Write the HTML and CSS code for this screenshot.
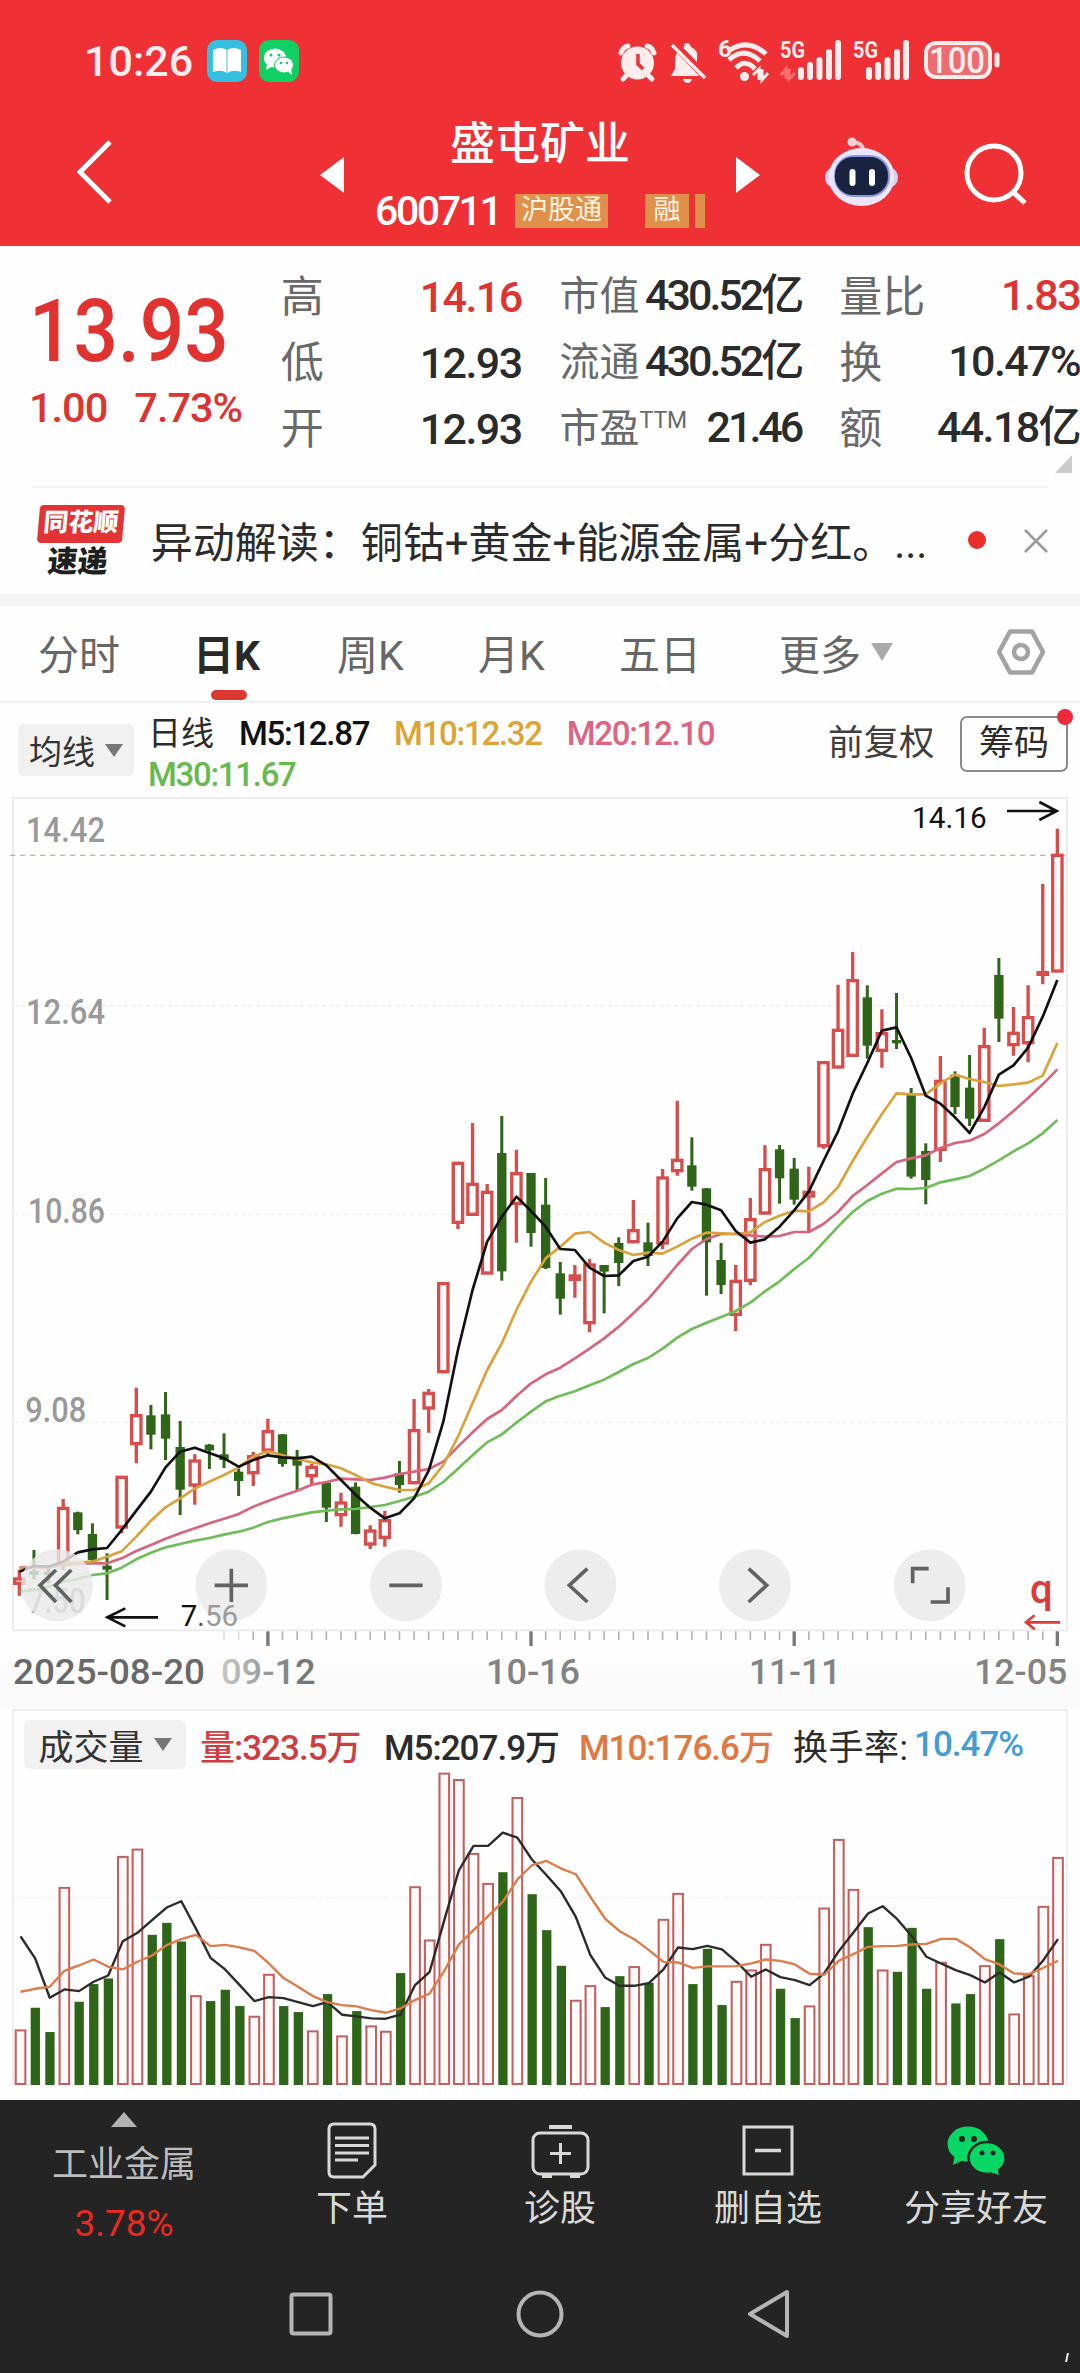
FILE: index.html
```
<!DOCTYPE html>
<html lang="zh-CN">
<head>
  <meta charset="UTF-8">
  <title>盛屯矿业 600711</title>
  <link rel="stylesheet" href="styles.css">
</head>
<body>
  <header class="top">
    <div class="status">
      <span class="clock">10:26</span>
      <svg class="app-icon" viewBox="0 0 40 42">
        <rect width="40" height="42" rx="10" fill="#35bfe0"/>
        <path d="M6 10Q14 6 20 10Q26 6 34 10V32Q26 29 20 33Q14 29 6 32Z" fill="#fff"/>
        <path d="M20 10V33" stroke="#a9dcea" stroke-width="2"/>
      </svg>
      <svg class="app-icon" viewBox="0 0 40 42">
        <rect width="40" height="42" rx="10" fill="#10cf63"/>
        <ellipse cx="16" cy="18" rx="11" ry="9.500" fill="#fff"/>
        <path d="M8 24L7 30L14 26Z" fill="#fff"/>
        <ellipse cx="25" cy="25" rx="9.500" ry="8" fill="#fff" stroke="#10cf63" stroke-width="1"/>
        <path d="M28 31L33 35L32 28Z" fill="#fff"/>
        <g fill="#10cf63"><circle cx="12" cy="15" r="1.500"/><circle cx="20" cy="15" r="1.500"/><circle cx="22" cy="23" r="1.300"/><circle cx="28" cy="23" r="1.300"/></g>
      </svg>
      <svg class="status-icons" viewBox="0 0 386 46">
        <!-- alarm -->
        <g fill="none" stroke="#ffecec" stroke-linecap="round">
          <path d="M4 11Q6 5 11 4M37 11Q35 5 30 4" stroke-width="5"/>
          <path d="M9 34L6 37M32 34L35 37" stroke-width="5"/>
        </g>
        <circle cx="20.500" cy="21" r="16.500" fill="#ffecec"/>
        <path d="M21 12V22L26 27" fill="none" stroke="#ef3034" stroke-width="3.500"/>
        <!-- muted bell -->
        <path d="M54 34H84L80 27V18Q82 8 74 5Q73 1 70 1Q67 1 67 5Q58 9 58 19V27ZM66 37H75Q74 41 70.500 41Q67 41 66 37Z" fill="#ffecec"/>
        <path d="M58 3L88 34" stroke="#ef3034" stroke-width="8"/>
        <path d="M55 3L88 36" stroke="#ffecec" stroke-width="3.500"/>
        <!-- wifi 6 -->
        <text x="101" y="15" class="tiny" textLength="10">6</text>
        <g fill="none" stroke="#ffecec" stroke-width="5">
          <path d="M113 8Q131 -4 149 12"/><path d="M112 18Q127 4 143 19"/><path d="M119 26Q128 16 138 27"/>
        </g>
        <circle cx="127.500" cy="34.500" r="4.500" fill="#ffecec"/>
        <path d="M136 33L142 27V38M151 31L145 38V27" stroke="#ffecec" stroke-width="3" fill="none"/>
        <!-- signals -->
        <text x="163" y="16" class="tiny" textLength="25" lengthAdjust="spacingAndGlyphs">5G</text>
        <path d="M164 33L169 27V37M178 31L172 37V27" stroke="#f97070" stroke-width="3" fill="none"/>
        <path d="M184 28V35M193 23V35M202.500 18V35M212 10V35M221 1V35" stroke="#ffecec" stroke-width="6" stroke-linecap="round"/>
        <text x="236" y="16" class="tiny" textLength="25" lengthAdjust="spacingAndGlyphs">5G</text>
        <path d="M252 28V35M261 23V35M270.500 18V35M280 10V35M289 1V35" stroke="#ffecec" stroke-width="6" stroke-linecap="round"/>
        <!-- battery -->
        <rect x="309" y="1" width="64" height="34" rx="10" fill="#ee6b70" stroke="#ffecec" stroke-width="4"/>
        <path d="M380 13V23" stroke="#ffecec" stroke-width="5" stroke-linecap="round"/>
        <text x="312" y="31" class="battery" textLength="56" lengthAdjust="spacingAndGlyphs">100</text>
      </svg>
    </div>
    <nav class="nav">
      <svg class="back" viewBox="0 0 36 64"><path d="M33 2L3 32L33 62" fill="none" stroke="#fff" stroke-width="5"/></svg>
      <svg class="tri prev" viewBox="0 0 24 36"><path d="M24 0V36L0 18Z" fill="#fff"/></svg>
      <div class="title">
        <h1>盛屯矿业</h1>
        <div class="code"><span class="num">600711</span><b class="tag">沪股通</b><b class="tag rong">融</b><b class="tag cut"></b></div>
      </div>
      <svg class="tri" viewBox="0 0 24 36"><path d="M0 0V36L24 18Z" fill="#fff"/></svg>
      <svg class="robot" viewBox="0 0 76 70">
        <path d="M40 13Q40 6 30 5" fill="none" stroke="#f0c4cf" stroke-width="4"/>
        <circle cx="29" cy="5" r="4.500" fill="#f8d3da"/>
        <rect x="2" y="30" width="73" height="21" rx="10" fill="#d9cff4"/>
        <ellipse cx="38.500" cy="40" rx="33" ry="29" fill="#ebe6fb"/>
        <rect x="11" y="18" width="56" height="42" rx="20" fill="#8d92ec"/>
        <rect x="12" y="20" width="53" height="38" rx="18" fill="#17233f"/>
        <path d="M29.500 35V46M49 35V46" stroke="#fff" stroke-width="6" stroke-linecap="round"/>
      </svg>
      <svg class="search" viewBox="0 0 64 64"><circle cx="30" cy="30" r="27" fill="none" stroke="#fff" stroke-width="5"/><path d="M49 49L61 60" stroke="#fff" stroke-width="5"/></svg>
    </nav>
  </header>

  <section class="quote">
    <div class="last">
      <div class="price">13.93</div>
      <div class="change"><span>1.00</span><span>7.73%</span></div>
    </div>
    <dl class="stats s1">
      <div><dt>高</dt><dd class="up">14.16</dd></div>
      <div><dt>低</dt><dd>12.93</dd></div>
      <div><dt>开</dt><dd>12.93</dd></div>
    </dl>
    <dl class="stats s2">
      <div><dt>市值</dt><dd>430.52亿</dd></div>
      <div><dt>流通</dt><dd>430.52亿</dd></div>
      <div><dt>市盈<sup>TTM</sup></dt><dd>21.46</dd></div>
    </dl>
    <dl class="stats s3">
      <div><dt>量比</dt><dd class="up">1.83</dd></div>
      <div><dt>换</dt><dd>10.47%</dd></div>
      <div><dt>额</dt><dd>44.18亿</dd></div>
    </dl>
    <i class="corner"></i>
  </section>

  <section class="news">
    <div class="logo"><span class="logo-top">同花顺</span><span class="logo-bottom">速递</span></div>
    <p>异动解读：铜钴+黄金+能源金属+分红。...</p>
    <i class="dot"></i>
    <svg class="close" viewBox="0 0 26 26"><path d="M2 2L24 24M24 2L2 24" stroke="#999" stroke-width="2.500"/></svg>
  </section>

  <div class="tabs">
    <span>分时</span>
    <span class="on">日K</span>
    <span>周K</span>
    <span>月K</span>
    <span>五日</span>
    <span class="more">更多<i class="down"></i></span>
    <svg class="gear" viewBox="0 0 50 46"><path d="M14 2.500H36L47 23L36 43.500H14L3 23Z" fill="none" stroke="#a2a2a2" stroke-width="4.500" stroke-linejoin="round"/><circle cx="25" cy="23" r="7" fill="none" stroke="#a2a2a2" stroke-width="4.500"/></svg>
  </div>

  <div class="ma">
    <span class="chip">均线<i class="down"></i></span>
    <div class="ma-list">
      <span class="cn">日线</span><span class="m5">M5:12.87</span><span class="m10">M10:12.32</span><span class="m20">M20:12.10</span><span class="m30">M30:11.67</span>
    </div>
    <span class="fuquan">前复权</span>
    <span class="chouma">筹码<i></i></span>
  </div>

  <svg id="kline" class="kline" viewBox="0 51 3240 2733"></svg>

  <section class="volume">
    <div class="vol-head">
      <span class="chip">成交量<i class="down"></i></span>
      <span class="v1">量:323.5万</span>
      <span class="v2">M5:207.9万</span>
      <span class="v3">M10:176.6万</span>
      <span class="v4">换手率:</span><span class="v5">10.47%</span>
    </div>
    <svg id="vol" class="vol-chart" viewBox="38 203 3062 952" preserveAspectRatio="none"></svg>
  </section>

  <footer class="bottom">
    <div class="menu">
      <div class="sector"><i class="caret"></i><span>工业金属</span><em>3.78%</em></div>
      <div class="item">
        <svg viewBox="0 0 60 58"><path d="M12 2H48Q53 2 53 7V43L41 55H12Q7 55 7 50V7Q7 2 12 2ZM13 16H47M13 23.500H47M13 31H47M13 38H36" fill="none" stroke="#d8d8d8" stroke-width="3"/></svg>
        <span>下单</span>
      </div>
      <div class="item">
        <svg viewBox="0 0 60 58"><rect x="3" y="11" width="55" height="41" rx="7" fill="none" stroke="#d8d8d8" stroke-width="3"/><path d="M19 5H42M12 54H22M40 54H50" stroke="#d8d8d8" stroke-width="4"/><path d="M30.500 21V42M20 31.500H41" stroke="#d8d8d8" stroke-width="3"/></svg>
        <span>诊股</span>
      </div>
      <div class="item">
        <svg viewBox="0 0 60 58"><rect x="6" y="5" width="48" height="47" fill="none" stroke="#d8d8d8" stroke-width="3"/><path d="M17 28.500H43" stroke="#d8d8d8" stroke-width="3.500"/></svg>
        <span>删自选</span>
      </div>
      <div class="item">
        <svg viewBox="0 0 60 58"><g fill="#07d765"><ellipse cx="22" cy="22" rx="20.500" ry="17.500"/><path d="M9 32L7 43L19 37Z"/><ellipse cx="41" cy="36" rx="18.500" ry="16" stroke="#242424" stroke-width="2.500"/><path d="M44 50L53 53L51 44Z"/></g><g fill="#242424"><circle cx="16" cy="17" r="3"/><circle cx="28" cy="17" r="3"/><circle cx="36" cy="31" r="2.500"/><circle cx="47" cy="31" r="2.500"/></g></svg>
        <span>分享好友</span>
      </div>
    </div>
    <div class="sysnav">
      <svg viewBox="0 0 48 50"><rect x="4.500" y="5.500" width="39" height="39" rx="2" fill="none" stroke="#b5b5b5" stroke-width="4"/></svg>
      <svg viewBox="0 0 48 50"><circle cx="24" cy="25" r="21.500" fill="none" stroke="#b5b5b5" stroke-width="4"/></svg>
      <svg viewBox="0 0 48 50"><path d="M42 3V47L5 25Z" fill="none" stroke="#b5b5b5" stroke-width="4" stroke-linejoin="round"/></svg>
    </div>
    <i class="mark"></i>
  </footer>

  <script src="chart.js"></script>
</body>
</html>
```
FILE: styles.css
```
* {
  box-sizing: border-box;
}

body {
  margin: 0;
  width: 1080px;
  height: 2373px;
  overflow: hidden;
  background: #fefefe;
  color: #2b2b2b;
  font-family: Roboto, "Noto Sans CJK SC", sans-serif;
}

svg {
  display: block;
  flex: none;
}

i, em, b {
  font-style: normal;
  font-weight: 400;
}

/* header */
.top {
  height: 246px;
  background: #ef3034;
  color: #fff;
}

.status {
  display: flex;
  align-items: center;
  height: 122px;
  padding-left: 84px;
}

.clock {
  width: 123px;
  font-size: 43px;
  font-weight: 500;
  color: #ffecec;
}

.app-icon {
  width: 40px;
  height: 42px;
  margin-right: 12px;
}

.status-icons {
  width: 386px;
  height: 46px;
  margin: 8px 0 0 306px;
  overflow: visible;
}

.tiny {
  font-size: 24px;
  font-weight: 700;
  fill: #ffecec;
}

.battery {
  font-size: 36px;
  font-weight: 500;
  fill: #ffecec;
}

.nav {
  display: flex;
  height: 124px;
}

.back {
  width: 36px;
  height: 64px;
  margin: 18px 0 0 77px;
}

.tri {
  width: 24px;
  height: 36px;
  margin-top: 35px;
}

.prev {
  margin-left: 207px;
}

.title {
  width: 392px;
}

h1 {
  margin: 0;
  font-size: 45px;
  font-weight: 500;
  line-height: 46px;
  text-align: center;
}

.code {
  display: flex;
  justify-content: center;
  align-items: center;
  height: 34px;
  margin-top: 26px;
}

.code .num {
  width: 140px;
  font-size: 41px;
  font-weight: 500;
  letter-spacing: -2.4px;
}

.tag {
  width: 93px;
  height: 34px;
  background: #df914b;
  color: #fff3e2;
  font-size: 27px;
  line-height: 33px;
  text-align: center;
}

.rong {
  width: 44px;
  margin: 0 6px 0 37px;
}

.cut {
  width: 10px;
}

.robot {
  width: 76px;
  height: 70px;
  margin: 15px 0 0 63px;
}

.search {
  width: 64px;
  height: 64px;
  margin: 21px 0 0 65px;
}

/* quote */
.quote {
  position: relative;
  display: flex;
  height: 240px;
  padding-top: 18px;
}

.last {
  width: 281px;
  padding-left: 29px;
  color: #e03331;
}

.price {
  height: 100px;
  margin-top: 17px;
  font-size: 88px;
  font-weight: 500;
  line-height: 100px;
  transform: scaleX(0.89);
  transform-origin: left;
}

.change {
  display: flex;
  gap: 27px;
  margin-top: 2px;
  font-size: 41.5px;
  font-weight: 500;
  line-height: 50px;
  letter-spacing: -1px;
}

.stats {
  margin: 0;
}

.stats div {
  display: flex;
  justify-content: space-between;
  align-items: center;
  height: 66px;
  white-space: nowrap;
}

dt {
  position: relative;
  top: -4px;
  color: #696969;
  font-size: 43px;
}

dd {
  margin: 0;
  font-size: 43px;
  font-weight: 500;
  letter-spacing: -1.6px;
  line-height: 64px;
}

dd.up {
  color: #e03331;
}

sup {
  font-size: 23px;
  line-height: 0;
  vertical-align: 14px;
}

.s1 {
  width: 241px;
}

.s2 {
  width: 242px;
  margin-left: 38px;
}

.s2 dt {
  font-size: 40px;
}

.s2 dd {
  letter-spacing: -3px;
}

.s2 dd,
.s3 dd {
  position: relative;
  top: -2px;
}

.s3 {
  width: 241px;
  margin-left: 38px;
}

.corner {
  position: absolute;
  right: 8px;
  bottom: 13px;
  border-left: 17px solid transparent;
  border-bottom: 18px solid #ccc;
}

/* news line */
.news {
  display: flex;
  align-items: center;
  height: 108px;
  margin: 0 31px;
  border-top: 2px solid #f3f3f3;
}

.logo {
  width: 85px;
  margin: 0 30px 0 6px;
  transform: skewX(-5deg);
}

.logo span {
  display: block;
  text-align: center;
  font-weight: 900;
}

.logo-top {
  height: 38px;
  border-radius: 4px;
  background: #e33435;
  color: #fff;
  font-size: 25px;
  line-height: 36px;
}

.logo-bottom {
  height: 34px;
  color: #1f1f1f;
  font-size: 30px;
  line-height: 38px;
}

.news p {
  width: 786px;
  margin: -4px 0 0 -1px;
  font-size: 42px;
  white-space: nowrap;
}

.dot {
  flex: none;
  width: 18px;
  height: 18px;
  margin: -2px 44px 0 34px;
  border-radius: 50%;
  background: #ea2d2b;
}

.news p + .dot {
  margin-right: 37px;
}

.close {
  width: 26px;
  height: 26px;
}

/* period tabs */
.tabs {
  display: flex;
  align-items: center;
  height: 109px;
  padding: 0 0 3px 38px;
  border-top: 12px solid #f4f4f4;
  border-bottom: 2px solid #f0f0f0;
  color: #666;
  font-size: 41px;
}

.tabs span {
  width: 141px;
  white-space: nowrap;
}

.tabs .on {
  position: relative;
  width: 66px;
  margin: 0 78px 0 14px;
  color: #292929;
  font-weight: 700;
}

.tabs .on::after {
  content: "";
  position: absolute;
  left: 18px;
  bottom: -18px;
  width: 36px;
  height: 10px;
  border-radius: 5px;
  background: #dc3731;
}

.tabs .more {
  display: flex;
  align-items: center;
  width: 217px;
  margin-left: 19px;
}

.down {
  display: inline-block;
  border: 11px solid transparent;
  border-top: 18px solid #aaa;
  border-bottom: 0;
  margin-left: 10px;
}

.gear {
  width: 50px;
  height: 46px;
}

/* moving averages */
.ma {
  display: flex;
  height: 94px;
  padding-left: 18px;
}

.chip {
  display: flex;
  align-items: center;
  justify-content: center;
  border-radius: 6px;
  background: #f1f1f1;
  color: #333;
}

.chip .down {
  border-width: 13px 9px 0;
  border-top-color: #777;
}

.ma .chip {
  flex: none;
  width: 116px;
  height: 52px;
  margin-top: 21px;
  font-size: 33px;
}

.ma-list {
  display: flex;
  flex: none;
  flex-wrap: wrap;
  align-content: flex-start;
  column-gap: 25px;
  width: 680px;
  padding: 10px 60px 0 14px;
  font-size: 33px;
  font-weight: 500;
  line-height: 41px;
  letter-spacing: -1.3px;
}

.cn {
  font-weight: 400;
  letter-spacing: 0;
}

.m5 {
  color: #111;
}

.m10 {
  color: #dca336;
}

.m20 {
  color: #df6480;
}

.m30 {
  color: #65b94f;
}

.fuquan {
  flex: none;
  width: 146px;
  padding-left: 14px;
  font-size: 35.5px;
  line-height: 80px;
  color: #3f3f3f;
  white-space: nowrap;
}

.chouma {
  position: relative;
  flex: none;
  width: 108px;
  height: 56px;
  margin-top: 13px;
  border: 2px solid #8b8b8b;
  border-radius: 7px;
  font-size: 35px;
  line-height: 51px;
  text-align: center;
}

.chouma i {
  position: absolute;
  top: -9px;
  right: -7px;
  width: 16px;
  height: 16px;
  border-radius: 50%;
  background: #f0283c;
}

.kline {
  width: 1080px;
  height: 911px;
}

.axis {
  font-size: 103px;
  font-weight: 500;
  fill: #999;
}

.mark-text {
  font-size: 88px;
  fill: #111;
}

.date {
  font-size: 106px;
  font-weight: 500;
  fill: #838383;
}

/* volume */
.volume {
  height: 376px;
  margin: 1px 12px 16px;
  border: 2px solid #eee;
  border-bottom: 0;
}

.vol-head {
  display: flex;
  align-items: center;
  height: 57px;
  padding: 10px 0 0 10px;
  font-size: 35px;
  font-weight: 500;
  letter-spacing: -1px;
  white-space: nowrap;
}

.vol-head .chip {
  width: 162px;
  height: 49px;
  margin-right: 14px;
  font-weight: 400;
  letter-spacing: 0;
}

.v1 {
  width: 184px;
  color: #cf3e3e;
}

.v2 {
  width: 195px;
}

.v3 {
  width: 214px;
  color: #e27742;
}

.v4 {
  width: 121px;
  font-weight: 400;
  letter-spacing: 0.5px;
}

.v5 {
  color: #429dd5;
}

.vol-chart {
  width: 1054px;
  height: 317px;
}

/* bottom bar */
.bottom {
  position: relative;
  height: 275px;
  margin-top: -1px;
  background: #242424;
  color: #d9d9d9;
}

.menu {
  display: flex;
  height: 170px;
  font-size: 36px;
}

.sector {
  display: flex;
  flex-direction: column;
  align-items: center;
  width: 248px;
  padding-top: 12px;
}

.sector span {
  margin-top: 13px;
  line-height: 50px;
  color: #bcbcbc;
}

.sector em {
  margin-top: 10px;
  color: #ea2a22;
  font-size: 37px;
  line-height: 48px;
}

.caret {
  border: 13px solid transparent;
  border-top: 0;
  border-bottom: 15px solid #b3b3b3;
}

.item {
  display: flex;
  flex-direction: column;
  align-items: center;
  width: 208px;
  padding-top: 22px;
}

.item svg {
  width: 60px;
  height: 58px;
}

.item span {
  margin-top: 4px;
  line-height: 50px;
}

.sysnav {
  display: flex;
  justify-content: center;
  gap: 181px;
  padding-top: 19px;
}

.sysnav svg {
  width: 48px;
  height: 50px;
}

.mark {
  position: absolute;
  right: 12px;
  bottom: 13px;
  width: 2px;
  height: 9px;
  background: #eee;
  transform: skewX(-12deg);
}
```
FILE: chart.js
```
// one row per day: [up, high, body top, body bottom, low, volume top]
const days = [
  [1,2370,2395,2412,2447,988],[0,2310,2373,2385,2398,923],[0,2365,2375,2385,2410,996],[1,2157,2183,2355,2370,560],
  [0,2195,2197,2250,2263,905],[0,2230,2262,2340,2345,852],[0,2320,2357,2369,2460,835],[1,2088,2090,2243,2260,467],
  [1,1823,1905,1993,2050,445],[0,1875,1906,1964,2008,704],[0,1836,1903,1976,2040,668],[0,1923,2001,2129,2205,724],
  [1,2023,2041,2117,2174,885],[0,1992,1994,2011,2067,903],[0,1960,2023,2040,2064,869],[0,2065,2075,2103,2148,918],
  [1,2016,2028,2080,2118,947],[1,1916,1953,2012,2025,821],[0,1962,1963,2052,2060,918],[0,2010,2030,2057,2130,936],
  [1,2052,2060,2089,2115,991],[0,2103,2108,2183,2226,882],[1,2138,2167,2206,2240,1006],[0,2107,2120,2262,2263,933],
  [1,2236,2251,2294,2307,976],[1,2192,2220,2274,2300,992],[0,2043,2080,2115,2138,819],[1,1857,1950,2110,2113,558],
  [1,1827,1838,1886,1958,718],[1,1507,1509,1777,1780,217],[1,1145,1148,1329,1347,236],[1,1029,1211,1305,1307,458],
  [1,1212,1235,1481,1483,548],[0,1008,1119,1474,1502,516],[1,1109,1179,1272,1388,290],[0,1179,1179,1359,1400,582],
  [0,1194,1274,1464,1467,690],[0,1446,1480,1556,1604,797],[1,1455,1486,1500,1553,899],[1,1437,1453,1630,1657,855],
  [0,1455,1455,1475,1600,921],[0,1372,1389,1449,1518,828],[1,1260,1350,1387,1390,798],[0,1328,1387,1428,1458,848],
  [1,1167,1192,1391,1408,656],[1,962,1139,1174,1187,578],[0,1072,1156,1220,1232,852],[0,1224,1225,1387,1547,746],
  [0,1389,1440,1515,1542,915],[1,1455,1502,1605,1653,842],[1,1254,1317,1503,1516,808],[1,1096,1167,1301,1303,731],
  [0,1095,1108,1195,1271,866],[0,1134,1166,1259,1274,954],[1,1160,1235,1250,1356,916],[1,843,846,1099,1106,622],
  [1,614,749,863,865,416],[1,516,600,828,830,566],[0,616,652,797,836,681],[1,688,759,813,863,808],
  [0,639,780,790,807,815],[0,924,943,1190,1196,683],[0,1090,1113,1200,1273,866],[1,828,902,1110,1146,785],
  [0,874,884,981,1002,910],[0,825,923,1016,1038,882],[1,743,798,1023,1025,795],[0,534,585,716,786,717],
  [1,681,758,796,827,940],[1,616,711,790,847,825],[1,312,576,585,613,617],[1,146,224,575,577,470]
];

const ma5 = [2375,2358,2360,2345,2317,2308,2304,2250,2192,2135,2062,2015,2003,2019,2035,2060,2040,2026,2032,2035,2030,2056,2100,2144,2183,2215,2200,2155,2072,1925,1710,1530,1385,1310,1250,1293,1340,1407,1410,1463,1488,1486,1443,1430,1385,1315,1266,1274,1291,1353,1388,1378,1340,1291,1235,1143,1054,941,849,752,742,834,947,971,1012,1059,982,884,856,803,710,600];
const ma10 = [2365,2362,2360,2350,2348,2345,2330,2314,2270,2222,2182,2155,2126,2105,2085,2062,2030,2014,2026,2037,2047,2053,2065,2085,2108,2120,2130,2130,2110,2055,1970,1870,1770,1690,1590,1505,1435,1400,1361,1356,1388,1410,1425,1418,1421,1400,1376,1358,1360,1362,1357,1326,1307,1292,1294,1267,1221,1143,1071,1002,940,943,943,910,884,897,906,918,913,908,887,789];
const ma20 = [2363,2362,2362,2355,2350,2350,2350,2335,2313,2295,2276,2260,2245,2230,2216,2202,2180,2163,2147,2132,2114,2106,2096,2098,2100,2093,2082,2075,2067,2045,2000,1957,1917,1890,1848,1810,1783,1763,1735,1706,1675,1640,1600,1558,1507,1455,1407,1377,1362,1362,1366,1370,1368,1356,1356,1332,1296,1248,1215,1180,1146,1135,1126,1104,1089,1082,1062,1030,993,954,913,868];
const ma30 = [2435,2430,2420,2405,2397,2385,2380,2363,2338,2318,2302,2292,2282,2274,2264,2255,2243,2226,2215,2206,2197,2192,2188,2187,2181,2175,2163,2150,2135,2106,2066,2026,1987,1963,1928,1895,1864,1847,1834,1816,1799,1776,1752,1734,1706,1673,1647,1628,1611,1593,1568,1534,1504,1467,1434,1387,1340,1296,1263,1241,1226,1227,1224,1207,1198,1188,1166,1141,1114,1090,1060,1020];
const vol5 = [709,775,893,868,873,845,826,723,698,660,622,603,685,773,808,855,903,891,894,906,918,906,944,949,955,956,944,855,815,660,510,437,437,397,412,478,525,575,650,765,832,857,857,849,808,742,747,737,748,785,830,808,831,840,855,820,753,697,640,618,657,708,770,790,810,825,847,817,847,830,780,717];
const vol10 = [875,866,860,812,796,778,800,808,785,766,735,717,704,738,734,742,752,790,834,860,888,906,915,919,930,938,925,900,880,812,733,690,648,605,538,495,482,505,522,590,655,693,717,750,785,787,803,799,799,798,790,778,782,793,821,824,782,762,740,738,737,733,731,716,716,742,777,793,820,822,803,782];

const red = "#d84c4c";
const green = "#2f6518";

const line = (arr, x, color, w) =>
  `<polyline points="${arr.map((y, i) => x(i) + "," + y).join(" ")}" fill="none" stroke="${color}" stroke-width="${w}" stroke-linejoin="round"/>`;
const label = (x, y, w, text, cls, extra = "") =>
  `<text x="${x}" y="${y}" textLength="${w}" lengthAdjust="spacingAndGlyphs" class="${cls}" ${extra}>${text}</text>`;

function drawKline() {
  const x = i => 58 + i * 43.86;
  let s = `<defs>
    <linearGradient id="floor" x2="0" y2="1"><stop stop-color="#fff"/><stop offset="1" stop-color="#f9f9f9"/></linearGradient>
    <linearGradient id="fade" gradientUnits="userSpaceOnUse" x1="650" x2="900" y1="0" y2="0"><stop stop-color="#ccc"/><stop offset="1" stop-color="#777"/></linearGradient>
    <linearGradient id="low" gradientUnits="userSpaceOnUse" x1="596" x2="610" y1="0" y2="0"><stop stop-color="#111"/><stop offset="1" stop-color="#999"/></linearGradient>
  </defs>
  <rect x="0" y="2552" width="3240" height="232" fill="url(#floor)"/>
  <rect x="39" y="54" width="3162" height="2497" fill="none" stroke="#eaecee" stroke-width="6"/>`;

  [677, 1303, 1927].forEach(y => {
    s += `<path d="M42 ${y}H3198" stroke="#e8e8e8" stroke-width="3" stroke-dasharray="12 10"/>`;
  });
  s += `<path d="M30 226H3204" stroke="#bcb982" stroke-width="4" stroke-dasharray="16 14"/>`;

  s += label(78, 186, 237, "14.42", "axis") + label(78, 731, 237, "12.64", "axis")
    + label(84, 1329, 231, "10.86", "axis") + label(76, 1927, 183, "9.08", "axis")
    + label(84, 2500, 172, "7.50", "axis");

  days.forEach(([up, high, top, bottom, low], i) => {
    const cx = x(i);
    if (up) {
      s += `<path d="M${cx} ${high}V${top}M${cx} ${bottom}V${low}" stroke="${red}" stroke-width="10"/>`;
      s += `<rect x="${cx - 14}" y="${top + 2}" width="28" height="${bottom - top - 4}" fill="#fff" stroke="${red}" stroke-width="10"/>`;
    } else {
      s += `<path d="M${cx} ${high}V${low}" stroke="${green}" stroke-width="9"/>`;
      s += `<rect x="${cx - 14}" y="${top}" width="28" height="${bottom - top}" fill="${green}"/>`;
    }
  });

  s += line(ma30, x, "#6fbd59", 8) + line(ma20, x, "#d9647d", 8) + line(ma10, x, "#dba23c", 8) + line(ma5, x, "#111", 8);

  // high / low marks
  s += label(2736, 144, 224, "14.16", "mark-text");
  s += `<path d="M3021 93H3168M3118 66L3170 93L3118 120" fill="none" stroke="#111" stroke-width="8"/>`;
  s += `<path d="M474 2512H324M376 2485L322 2512L376 2539" fill="none" stroke="#111" stroke-width="8"/>`;

  // round chart buttons
  [171, 694, 1218, 1741, 2265, 2789].forEach(cx => {
    s += `<circle cx="${cx}" cy="2416" r="108" fill="#e9e9e9" opacity=".82"/>`;
  });
  s += label(542, 2538, 172, "7.56", "mark-text", 'style="fill:url(#low)"');
  s += `<path d="M168 2370L120 2416L168 2466M214 2370L166 2416L214 2466M644 2416H744M694 2366V2466M1168 2416H1268M1762 2366L1708 2416L1762 2466M2246 2366L2300 2416L2246 2466M2738 2410V2366H2786M2844 2422V2466H2792" fill="none" stroke="#626262" stroke-width="11"/>`;

  s += `<text x="3090" y="2470" style="font-size:120px;font-weight:500;fill:#dc3c37">q</text>`;
  s += `<path d="M3180 2527H3080M3104 2506L3078 2527L3104 2548" fill="none" stroke="#dc3c37" stroke-width="8"/>`;

  for (let i = 14; i < 72; i++) {
    const major = i % 18 === 17;
    s += `<path d="M${x(i)} 2554V${major ? 2598 : 2580}" stroke="${major ? "#777" : i < 16 ? "#ddd" : "#b5b5b5"}" stroke-width="${major ? 10 : 5}"/>`;
  }
  s += label(39, 2712, 576, "2025-08-20", "date", 'style="fill:#686868"')
    + label(663, 2712, 284, "09-12", "date", 'style="fill:url(#fade)"')
    + label(1458, 2712, 282, "10-16", "date") + label(2247, 2712, 276, "11-11", "date")
    + label(2922, 2712, 280, "12-05", "date");
  document.getElementById("kline").innerHTML = s;
}

function drawVolume() {
  const x = i => 57 + i * 42.45;
  let s = `<path d="M42 592H3096" stroke="#ececec" stroke-width="3" stroke-dasharray="12 9"/>`;
  days.forEach(([up, , , , , top], i) => {
    s += up
      ? `<rect x="${x(i) - 14}" y="${top + 3}" width="28" height="${1149 - top}" fill="#fffafa" stroke="#c3605f" stroke-width="6"/>`
      : `<rect x="${x(i) - 13}" y="${top}" width="27" height="${1155 - top}" fill="${green}"/>`;
  });
  s += line(vol5, x, "#2b2b2b", 7) + line(vol10, x, "#de7b4b", 7);
  document.getElementById("vol").innerHTML = s;
}

drawKline();
drawVolume();
```
